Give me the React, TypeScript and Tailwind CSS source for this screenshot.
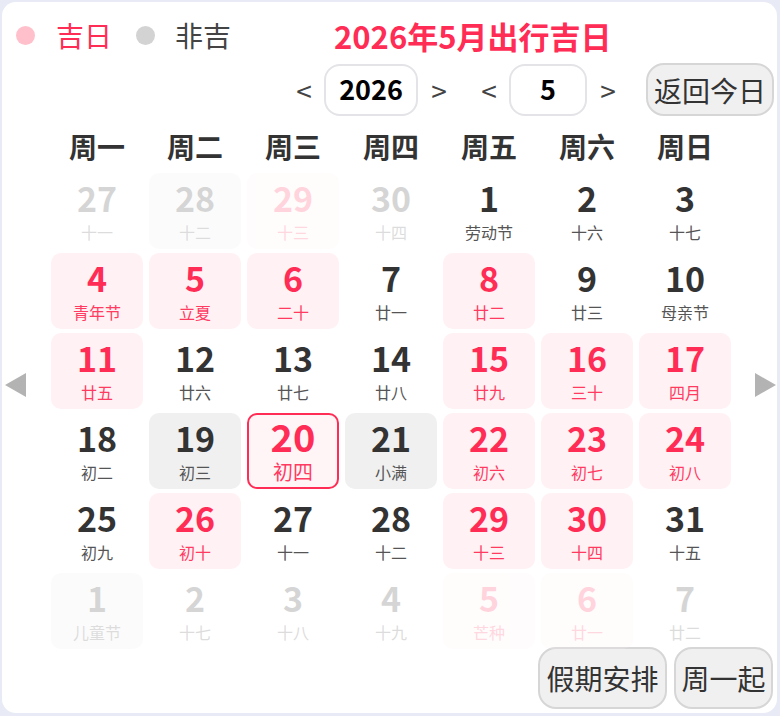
type Kind = "normal" | "lucky" | "busy" | "today";

interface Day {
  n: number;
  lunar: string;
  kind: Kind;
  other?: boolean;
}

const d = (n: number, lunar: string, kind: Kind = "normal", other = false): Day => ({ n, lunar, kind, other });

const days: Day[] = [
  d(27, "十一", "normal", true), d(28, "十二", "busy", true), d(29, "十三", "lucky", true), d(30, "十四", "normal", true),
  d(1, "劳动节"), d(2, "十六"), d(3, "十七"),
  d(4, "青年节", "lucky"), d(5, "立夏", "lucky"), d(6, "二十", "lucky"), d(7, "廿一"), d(8, "廿二", "lucky"), d(9, "廿三"), d(10, "母亲节"),
  d(11, "廿五", "lucky"), d(12, "廿六"), d(13, "廿七"), d(14, "廿八"), d(15, "廿九", "lucky"), d(16, "三十", "lucky"), d(17, "四月", "lucky"),
  d(18, "初二"), d(19, "初三", "busy"), d(20, "初四", "today"), d(21, "小满", "busy"), d(22, "初六", "lucky"), d(23, "初七", "lucky"), d(24, "初八", "lucky"),
  d(25, "初九"), d(26, "初十", "lucky"), d(27, "十一"), d(28, "十二"), d(29, "十三", "lucky"), d(30, "十四", "lucky"), d(31, "十五"),
  d(1, "儿童节", "busy", true), d(2, "十七", "normal", true), d(3, "十八", "normal", true), d(4, "十九", "normal", true),
  d(5, "芒种", "lucky", true), d(6, "廿一", "lucky", true), d(7, "廿二", "normal", true),
];

const weekdays = ["周一", "周二", "周三", "周四", "周五", "周六", "周日"];

function Cell({ day }: { day: Day }) {
  if (day.kind === "today") {
    return (
      <div className="h-[76px] rounded-[10px] border-2 border-[#ff2d55] bg-[#fff5f7] flex flex-col items-center pt-[2px]">
        <div className="text-[38px] leading-none font-bold text-[#ff2d55]">{day.n}</div>
        <div className="mt-[7px] text-[20px] leading-none text-[#ff3b62]">{day.lunar}</div>
      </div>
    );
  }
  const bg =
    day.kind === "lucky" ? "bg-[#fff1f4]" : day.kind === "busy" ? "bg-[#f0f0f0]" : "";
  const num = day.kind === "lucky" ? "text-[#ff2d55]" : "text-[#333333]";
  const sub = day.kind === "lucky" ? "text-[#ff3b62]" : "text-[#555555]";
  return (
    <div
      className={`h-[76px] rounded-[10px] flex flex-col items-center pt-[8px] ${bg} ${
        day.other ? "opacity-[0.2]" : ""
      }`}
    >
      <div className={`text-[34px] leading-none font-bold ${num}`}>{day.n}</div>
      <div className={`mt-[9px] text-[16px] leading-none ${sub}`}>{day.lunar}</div>
    </div>
  );
}

function Triangle({ dir }: { dir: "left" | "right" }) {
  return (
    <svg width="21" height="24" viewBox="0 0 21 24">
      <polygon
        points={dir === "left" ? "21,0 21,24 0,12" : "0,0 0,24 21,12"}
        fill="#b3b3b3"
      />
    </svg>
  );
}

export default function App() {
  return (
    <div
      className="w-[780px] h-[716px] bg-[#e8ebf6] pt-[2px] pl-[2px] pr-[3px] pb-[3px]"
      style={{ fontFamily: '"Noto Sans CJK SC", "Noto Sans", sans-serif' }}
    >
      <div className="h-full rounded-[14px] bg-white overflow-hidden">
        {/* header */}
        <div className="flex items-center h-[48px] mt-[9px] pl-[14px]">
          <span className="w-[19px] h-[19px] rounded-full bg-[#ffc0cb]" />
          <span className="ml-[21px] text-[28px] leading-none text-[#ff2d55]">吉日</span>
          <span className="ml-[24px] w-[19px] h-[19px] rounded-full bg-[#d3d3d3]" />
          <span className="ml-[20px] text-[28px] leading-none text-[#444444]">非吉</span>
          <span className="ml-[103px] text-[31px] leading-none font-bold text-[#ff2d55]">2026年5月出行吉日</span>
        </div>

        {/* selectors */}
        <div className="flex items-center justify-end h-[53px] mt-[4px] pr-[3px]">
          <span className="w-[24px] text-center text-[28px] leading-none text-[#444444]">&lt;</span>
          <div className="ml-[8px] w-[94px] h-[52px] rounded-[16px] border-2 border-[#e4e4e8] flex items-center justify-center text-[27px] font-bold text-black">
            2026
          </div>
          <span className="ml-[9px] w-[24px] text-center text-[28px] leading-none text-[#444444]">&gt;</span>
          <span className="ml-[26px] w-[24px] text-center text-[28px] leading-none text-[#444444]">&lt;</span>
          <div className="ml-[8px] w-[78px] h-[52px] rounded-[16px] border-2 border-[#e4e4e8] flex items-center justify-center text-[27px] font-bold text-black">
            5
          </div>
          <span className="ml-[9px] w-[24px] text-center text-[28px] leading-none text-[#444444]">&gt;</span>
          <button className="ml-[26px] w-[128px] h-[53px] rounded-[18px] border-2 border-[#d6d6d6] bg-[#f0f0f0] text-[28px] text-[#333333] flex items-center justify-center">
            返回今日
          </button>
        </div>

        {/* weekdays */}
        <div className="mt-[10px] pl-[49px]">
          <div className="grid grid-cols-[repeat(7,92px)] gap-x-[6px] h-[40px] items-center">
            {weekdays.map((w) => (
              <div key={w} className="text-center text-[28px] leading-none font-bold text-[#333333]">
                {w}
              </div>
            ))}
          </div>
        </div>

        {/* grid */}
        <div className="flex mt-[7px]">
          <div className="w-[49px] pl-[3px] pt-[200px]">
            <Triangle dir="left" />
          </div>
          <div className="grid grid-cols-[repeat(7,92px)] gap-x-[6px] gap-y-[4px]">
            {days.map((day, i) => (
              <Cell key={i} day={day} />
            ))}
          </div>
          <div className="flex-1 pl-[24px] pt-[200px]">
            <Triangle dir="right" />
          </div>
        </div>

        {/* bottom buttons */}
        <div className="flex justify-end gap-[7px] pr-[4px] mt-[-2px]">
          <button className="w-[129px] h-[62px] rounded-[18px] border-2 border-[#d6d6d6] bg-[#f0f0f0] text-[28px] text-[#333333] flex items-center justify-center">
            假期安排
          </button>
          <button className="w-[99px] h-[62px] rounded-[18px] border-2 border-[#d6d6d6] bg-[#f0f0f0] text-[28px] text-[#333333] flex items-center justify-center">
            周一起
          </button>
        </div>
      </div>
    </div>
  );
}
